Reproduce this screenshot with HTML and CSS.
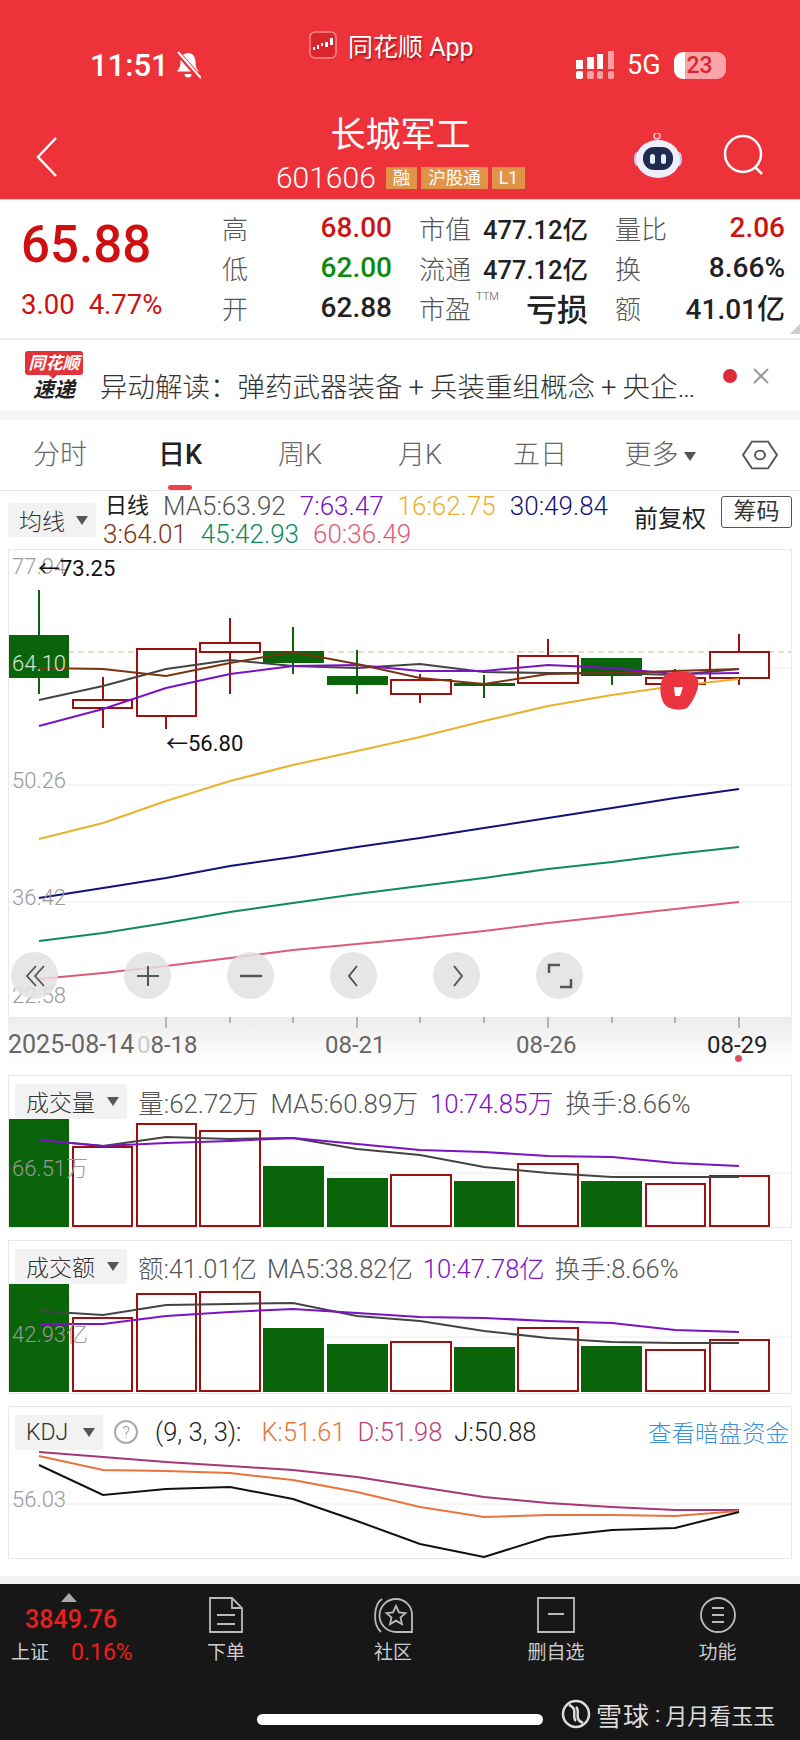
FILE: index.html
```html
<!DOCTYPE html>
<html lang="zh-CN">
<head>
    <meta charset="UTF-8">
    <meta name="viewport" content="width=device-width, initial-scale=1.0">
    <title>长城军工</title>
    <link rel="stylesheet" href="styles.css">
</head>
<body>
    <header class="top">
        <div class="status">
            <div class="status-time">
                <span>11:51</span>
                <svg class="bell" width="26" height="30" viewBox="0 0 26 30">
                    <path d="M13 3c-5 0-7.500 4-7.500 9 0 5-1.500 7-3.500 9.500h22c-2-2.500-3.500-4.500-3.500-9.500 0-5-2.500-9-7.500-9z" fill="#fff"/>
                    <path d="M9.500 24a3.500 3.500 0 0 0 7 0z" fill="#fff"/>
                    <path d="M2 2l23 26" stroke="#ee323a" stroke-width="5"/>
                    <path d="M3 2l23 26" stroke="#fff" stroke-width="2"/>
                </svg>
            </div>
            <div class="status-app">
                <svg width="28" height="28" viewBox="0 0 28 28">
                    <rect x="1" y="1" width="26" height="26" rx="5" fill="#d8262c" stroke="#f88" stroke-width="1.500"/>
                    <path d="M4 16h2v3H4zM8 14h2v4H8zM12 12h2v3h-2zM16 11h3v5h-3zM21 7h3v7h-3z" fill="#fff"/>
                </svg>
                <span>同花顺 App</span>
            </div>
            <div class="status-right">
                <svg width="40" height="30" viewBox="0 0 40 30">
                    <path d="M2 10h7v9H2zM13 7h7v12h-7zM23 4h6v15h-6z" fill="#fff"/>
                    <path d="M34 1h6v18h-6z" fill="#f8a0a4"/>
                    <rect x="2" y="21" width="7" height="8" rx="2" fill="#fff"/>
                    <rect x="13" y="21" width="7" height="8" rx="2" fill="#f8a0a4"/>
                    <rect x="23" y="21" width="6" height="8" rx="2" fill="#f8a0a4"/>
                    <rect x="34" y="21" width="6" height="8" rx="2" fill="#f8a0a4"/>
                </svg>
                <span class="net">5G</span>
                <span class="battery">23</span>
            </div>
        </div>
        <div class="nav">
            <div class="nav-left">
                <svg width="24" height="42" viewBox="0 0 24 42">
                    <path d="M21 2L3 21l18 19" fill="none" stroke="#fff" stroke-width="2.500"/>
                </svg>
            </div>
            <div class="nav-title">
                <h1>长城军工</h1>
                <div class="nav-code">
                    <span class="code">601606</span>
                    <span class="tag">融</span>
                    <span class="tag">沪股通</span>
                    <span class="tag">L1</span>
                </div>
            </div>
            <div class="nav-right">
                <svg width="52" height="46" viewBox="0 0 52 46">
                    <circle cx="25" cy="3" r="3" fill="none" stroke="#f6c6cc" stroke-width="1.500"/>
                    <ellipse cx="5" cy="26" rx="3" ry="7" fill="#c9c6f2"/>
                    <ellipse cx="47" cy="26" rx="3" ry="7" fill="#c9c6f2"/>
                    <ellipse cx="26" cy="26" rx="22" ry="19" fill="#eeeefc"/>
                    <rect x="11" y="14" width="30" height="23" rx="11" fill="#1f2b4f"/>
                    <rect x="18" y="21" width="5" height="10" rx="2.500" fill="#e8ecff"/>
                    <rect x="29" y="21" width="5" height="10" rx="2.500" fill="#e8ecff"/>
                </svg>
                <svg width="44" height="44" viewBox="0 0 44 44">
                    <circle cx="21" cy="21" r="18" fill="none" stroke="#fff" stroke-width="2.500"/>
                    <path d="M33 34l7 7" stroke="#fff" stroke-width="2.500"/>
                </svg>
            </div>
        </div>
    </header>

    <section class="quote">
        <div class="quote-price">
            <div class="price">65.88</div>
            <div class="change"><span>3.00</span><span>4.77%</span></div>
        </div>
        <div class="quote-grid">
            <div class="cell"><span class="lbl">高</span><span class="val red">68.00</span></div>
            <div class="cell"><span class="lbl">市值</span><span class="val cap">477.12亿</span></div>
            <div class="cell"><span class="lbl">量比</span><span class="val red">2.06</span></div>
            <div class="cell"><span class="lbl">低</span><span class="val green">62.00</span></div>
            <div class="cell"><span class="lbl">流通</span><span class="val cap">477.12亿</span></div>
            <div class="cell"><span class="lbl">换</span><span class="val">8.66%</span></div>
            <div class="cell"><span class="lbl">开</span><span class="val">62.88</span></div>
            <div class="cell"><span class="lbl">市盈<sup>TTM</sup></span><span class="val big">亏损</span></div>
            <div class="cell"><span class="lbl">额</span><span class="val">41.01亿</span></div>
        </div>
        <span class="corner"></span>
    </section>

    <section class="news">
        <div class="news-logo">
            <span class="news-flag">同花顺</span>
            <span class="news-sub">速递</span>
        </div>
        <p class="news-text">异动解读：弹药武器装备<span class="plus">+</span>兵装重组概念<span class="plus">+</span>央企…</p>
        <span class="news-dot"></span>
        <svg class="news-close" width="18" height="18" viewBox="0 0 18 18">
            <path d="M2 2l14 14M16 2L2 16" stroke="#999" stroke-width="2"/>
        </svg>
    </section>

    <nav class="tabs">
        <a class="tab">分时</a>
        <a class="tab active">日K</a>
        <a class="tab">周K</a>
        <a class="tab">月K</a>
        <a class="tab">五日</a>
        <a class="tab">更多<i class="tri small"></i></a>
        <svg class="tab-gear" width="36" height="32" viewBox="0 0 36 36" preserveAspectRatio="none">
            <path d="M10 3h16l9 15-9 15H10L1 18z" fill="none" stroke="#555" stroke-width="2"/>
            <circle cx="18" cy="18" r="5" fill="none" stroke="#555" stroke-width="2"/>
        </svg>
    </nav>

    <section class="legend">
        <div class="select ma-select"><span>均线</span><i class="tri"></i></div>
        <div class="ma-list">
            <span class="ma-day">日线</span>
            <span class="c-gray">MA5:63.92</span>
            <span class="c-purple">7:63.47</span>
            <span class="c-orange">16:62.75</span>
            <span class="c-navy">30:49.84</span>
            <span class="c-brown">3:64.01</span>
            <span class="c-teal">45:42.93</span>
            <span class="c-pink">60:36.49</span>
        </div>
        <span class="adjust">前复权</span>
        <span class="chip">筹码</span>
    </section>

    <section class="kline">
        <svg class="kline-svg" width="784" height="468" viewBox="8 549 784 468">
            <g stroke="#ececec" stroke-width="1">
                <path d="M8 667h784M8 784h784M8 901h784"/>
            </g>
            <path d="M8 651h784" stroke="#cbb9a0" stroke-width="1" stroke-dasharray="6 4"/>

            <g stroke="#0a640a" stroke-width="2">
                <path d="M39 589v104M293 626v47M357 649v44M484 674v23M612 675v9"/>
            </g>
            <g stroke="#9c1010" stroke-width="2">
                <path d="M103 676v51M166 715v13M230 617v76M420 673v29M548 638v17M675 668v15M739 633v51"/>
            </g>
            <g fill="#0a640a">
                <rect x="8" y="634" width="61" height="43"/>
                <rect x="263" y="650" width="61" height="12"/>
                <rect x="327" y="675" width="61" height="9"/>
                <rect x="454" y="682" width="61" height="3"/>
                <rect x="581" y="657" width="61" height="18"/>
            </g>
            <g fill="#fff" stroke="#9c1010" stroke-width="2">
                <rect x="73" y="699" width="59" height="8"/>
                <rect x="137" y="648" width="59" height="67"/>
                <rect x="200" y="642" width="60" height="9"/>
                <rect x="391" y="679" width="60" height="14"/>
                <rect x="518" y="655" width="60" height="27"/>
                <rect x="646" y="677" width="59" height="6"/>
                <rect x="710" y="651" width="59" height="26"/>
            </g>

            <g fill="none" stroke-width="2">
                <polyline stroke="#444" points="39,699 103,685 166,668 230,659 293,665 357,667 420,663 484,671 548,672 612,672 675,674 739,668"/>
                <polyline stroke="#7b12c4" points="39,725 103,708 166,687 230,673 293,665 357,664 420,670 484,670 548,664 612,667 675,673 739,672"/>
                <polyline stroke="#7a3311" points="39,667 103,668 166,675 230,662 293,651 357,663 420,677 484,683 548,673 612,672 675,670 739,668"/>
                <polyline stroke="#eab12e" points="39,838 103,822 166,800 230,780 293,764 357,750 420,736 484,720 548,705 612,694 675,685 739,678"/>
                <polyline stroke="#12127a" points="39,897 103,887 166,877 230,865 293,856 357,846 420,837 484,827 548,817 612,807 675,797 739,788"/>
                <polyline stroke="#0d8a60" points="39,940 103,932 166,922 230,911 293,902 357,893 420,885 484,877 548,868 612,861 675,853 739,846"/>
                <polyline stroke="#de5b78" points="39,978 103,972 166,965 230,957 293,949 357,943 420,937 484,930 548,922 612,915 675,908 739,901"/>
            </g>

            <path d="M666 673c14-5 29-3 32 6 2 8-5 22-11 28-8 3-20 2-24-6-4-9-4-21 3-28z" fill="#ea3540"/>
            <path d="M674 686h9l-3 9h-5z" fill="#fff"/>

            <g class="axis-text">
                <text x="12" y="573">77.94</text>
                <text x="12" y="670" fill="#d8e4d8">64.10</text>
                <text x="12" y="787">50.26</text>
                <text x="12" y="904">36.42</text>
                <text x="12" y="1002">22.58</text>
            </g>
            <g class="mark-text">
                <text x="38" y="575">←73.25</text>
                <text x="166" y="750">←56.80</text>
            </g>
        </svg>
        <div class="tools">
            <span class="tool first">
                <svg width="24" height="24" viewBox="0 0 24 24"><path d="M13 2L4 12l9 10M21 2l-9 10 9 10" fill="none" stroke="#555" stroke-width="1.800"/></svg>
            </span>
            <span class="tool">
                <svg width="24" height="24" viewBox="0 0 24 24"><path d="M12 2v20M1 12h22" fill="none" stroke="#555" stroke-width="2"/></svg>
            </span>
            <span class="tool">
                <svg width="24" height="24" viewBox="0 0 24 24"><path d="M1 12h22" fill="none" stroke="#555" stroke-width="2.500"/></svg>
            </span>
            <span class="tool">
                <svg width="24" height="24" viewBox="0 0 24 24"><path d="M15 2L7 12l8 10" fill="none" stroke="#555" stroke-width="2"/></svg>
            </span>
            <span class="tool">
                <svg width="24" height="24" viewBox="0 0 24 24"><path d="M9 2l8 10-8 10" fill="none" stroke="#555" stroke-width="2"/></svg>
            </span>
            <span class="tool">
                <svg width="28" height="26" viewBox="0 0 28 26"><path d="M14 2H3v8M14 24h11v-8" fill="none" stroke="#555" stroke-width="2.500"/></svg>
            </span>
        </div>
    </section>

    <section class="dates">
        <svg class="dates-ticks" width="784" height="12" viewBox="8 1017 784 12">
            <path d="M166 1017v11M357 1017v11M548 1017v11M739 1017v11M230 1017v6M293 1017v6M420 1017v6M484 1017v6M612 1017v6M675 1017v6" stroke="#777" stroke-width="1"/>
        </svg>
        <div class="dates-row">
            <span class="d1">2025-08-14</span>
            <span class="d2"><em>0</em>8-18</span>
            <span class="d3">08-21</span>
            <span class="d4">08-26</span>
            <span class="d5">08-29</span>
        </div>
        <span class="dates-dot"></span>
    </section>

    <section class="panel vol">
        <div class="panel-head">
            <div class="select"><span>成交量</span><i class="tri"></i></div>
            <span>量:62.72万</span>
            <span>MA5:60.89万</span>
            <span class="c-purple">10:74.85万</span>
            <span>换手:8.66%</span>
        </div>
        <svg class="panel-svg" width="784" height="108" viewBox="8 1119 784 108">
            <path d="M8 1173h784" stroke="#ececec"/>
            <g fill="#0a640a">
                <rect x="8" y="1119" width="61" height="108"/>
                <rect x="263" y="1166" width="61" height="61"/>
                <rect x="327" y="1178" width="61" height="49"/>
                <rect x="454" y="1181" width="61" height="46"/>
                <rect x="581" y="1181" width="61" height="46"/>
            </g>
            <g fill="#fff" stroke="#9c1010" stroke-width="2">
                <rect x="73" y="1147" width="59" height="79"/>
                <rect x="137" y="1124" width="59" height="102"/>
                <rect x="200" y="1131" width="60" height="95"/>
                <rect x="391" y="1175" width="60" height="51"/>
                <rect x="518" y="1164" width="60" height="62"/>
                <rect x="646" y="1184" width="59" height="42"/>
                <rect x="710" y="1176" width="59" height="50"/>
            </g>
            <g fill="none" stroke-width="2">
                <polyline stroke="#444" points="39,1140 103,1146 166,1137 230,1139 293,1138 357,1149 420,1155 484,1167 548,1173 612,1177 675,1177 739,1177"/>
                <polyline stroke="#7b12c4" points="39,1140 103,1146 166,1143 230,1141 293,1138 357,1144 420,1150 484,1152 548,1156 612,1157 675,1163 739,1166"/>
            </g>
            <text class="axis-text" x="12" y="1176" fill="#d8e4d8">66.51万</text>
        </svg>
    </section>

    <section class="panel amt">
        <div class="panel-head">
            <div class="select"><span>成交额</span><i class="tri"></i></div>
            <span>额:41.01亿</span>
            <span>MA5:38.82亿</span>
            <span class="c-purple">10:47.78亿</span>
            <span>换手:8.66%</span>
        </div>
        <svg class="panel-svg" width="784" height="108" viewBox="8 1285 784 108">
            <path d="M8 1338h784" stroke="#ececec"/>
            <g fill="#0a640a">
                <rect x="8" y="1285" width="61" height="108"/>
                <rect x="263" y="1329" width="61" height="64"/>
                <rect x="327" y="1345" width="61" height="48"/>
                <rect x="454" y="1348" width="61" height="45"/>
                <rect x="581" y="1347" width="61" height="46"/>
            </g>
            <g fill="#fff" stroke="#9c1010" stroke-width="2">
                <rect x="73" y="1319" width="59" height="73"/>
                <rect x="137" y="1295" width="59" height="97"/>
                <rect x="200" y="1293" width="60" height="99"/>
                <rect x="391" y="1343" width="60" height="49"/>
                <rect x="518" y="1329" width="60" height="63"/>
                <rect x="646" y="1351" width="59" height="41"/>
                <rect x="710" y="1341" width="59" height="51"/>
            </g>
            <g fill="none" stroke-width="2">
                <polyline stroke="#444" points="39,1312 103,1316 166,1306 230,1305 293,1304 357,1317 420,1322 484,1332 548,1339 612,1343 675,1344 739,1344"/>
                <polyline stroke="#7b12c4" points="39,1325 103,1325 166,1317 230,1313 293,1310 357,1314 420,1318 484,1319 548,1322 612,1324 675,1331 739,1333"/>
            </g>
            <text class="axis-text" x="12" y="1343" fill="#d8e4d8">42.93亿</text>
        </svg>
    </section>

    <section class="panel kdj">
        <div class="panel-head dark">
            <div class="select"><span>KDJ</span><i class="tri"></i></div>
            <span class="help">?</span>
            <span>(9, 3, 3):</span>
            <span class="c-k">K:51.61</span>
            <span class="c-d">D:51.98</span>
            <span>J:50.88</span>
            <a class="dark-pool">查看暗盘资金</a>
        </div>
        <svg class="panel-svg" width="784" height="108" viewBox="8 1450 784 108">
            <path d="M8 1504h784" stroke="#ececec"/>
            <g fill="none" stroke-width="2">
                <polyline stroke="#a8347a" points="39,1452 103,1457 166,1462 230,1466 293,1470 357,1477 420,1487 484,1497 548,1503 612,1507 675,1510 739,1510"/>
                <polyline stroke="#e8743b" points="39,1456 103,1470 166,1471 230,1473 293,1480 357,1492 420,1507 484,1517 548,1515 612,1515 675,1516 739,1511"/>
                <polyline stroke="#111" points="39,1465 103,1495 166,1489 230,1487 293,1499 357,1521 420,1544 484,1557 548,1537 612,1530 675,1528 739,1512"/>
            </g>
            <text class="axis-text" x="12" y="1507">56.03</text>
        </svg>
    </section>
    <div class="page-gap"></div>

    <footer class="bottom">
        <div class="bottom-bar">
            <div class="index">
                <i class="index-up"></i>
                <div class="index-num">3849.76</div>
                <div class="index-row"><span>上证</span><b>0.16%</b></div>
            </div>
            <div class="act">
                <svg width="36" height="38" viewBox="0 0 36 38">
                    <path d="M2 2h22l10 10v24H2zM24 2v10h10M9 19h18M9 28h18" fill="none" stroke="#bbb" stroke-width="1.800"/>
                </svg>
                <span>下单</span>
            </div>
            <div class="act">
                <svg width="44" height="38" viewBox="0 0 44 38">
                    <path d="M11 3C3 8 1 28 10 36" fill="none" stroke="#bbb" stroke-width="1.800"/>
                    <path d="M25 3a16 16 0 0 1 16 16v17H25a16 16 0 0 1 0-33z" fill="none" stroke="#bbb" stroke-width="1.800"/>
                    <path d="M25 10l3 6.500 6.500.6-5 4.500 1.500 6.500-6-3.500-6 3.500 1.500-6.500-5-4.500 6.500-.6z" fill="none" stroke="#bbb" stroke-width="1.800"/>
                </svg>
                <span>社区</span>
            </div>
            <div class="act">
                <svg width="40" height="38" viewBox="0 0 40 38">
                    <path d="M2 2h36v34H2zM12 18h16" fill="none" stroke="#bbb" stroke-width="1.800"/>
                </svg>
                <span>删自选</span>
            </div>
            <div class="act">
                <svg width="38" height="38" viewBox="0 0 38 38">
                    <circle cx="19" cy="19" r="17" fill="none" stroke="#bbb" stroke-width="1.800"/>
                    <path d="M13 12h12M13 19h12M13 26h12" stroke="#bbb" stroke-width="1.800"/>
                </svg>
                <span>功能</span>
            </div>
        </div>
        <div class="bottom-home">
            <span class="home-bar"></span>
            <div class="mark">
                <svg width="30" height="30" viewBox="0 0 30 30">
                    <circle cx="15" cy="15" r="13" fill="none" stroke="#ddd" stroke-width="2.500"/>
                    <path d="M8 6c10 4 2 12 7 16M22 24c-10-4-2-12-7-16" fill="none" stroke="#ddd" stroke-width="2.500"/>
                </svg>
                <span class="mark-brand">雪球</span>
                <span class="mark-colon">:</span>
                <span class="mark-name">月月看玉玉</span>
            </div>
        </div>
    </footer>
</body>
</html>
```

FILE: styles.css
```css
* {
    box-sizing: border-box;
}

body {
    margin: 0;
    width: 800px;
    height: 1740px;
    overflow: hidden;
    background-color: #fff;
    font-family: Roboto, "Noto Sans CJK SC", sans-serif;
    color: #333;
}

/* header */
.top {
    height: 199px;
    background-color: #ee323a;
    color: #fff;
}

.status {
    display: flex;
    height: 110px;
    padding-left: 90px;
}

.status-time {
    display: flex;
    align-items: center;
    gap: 6px;
    width: 219px;
    height: 30px;
    margin-top: 50px;
    font-size: 31px;
    font-weight: 500;
}

.status-app {
    display: flex;
    align-items: center;
    gap: 11px;
    width: 265px;
    height: 30px;
    margin-top: 30px;
    font-size: 25px;
    text-shadow: 1px 2px 2px rgba(120, 0, 0, 0.6);
}

.status-right {
    display: flex;
    align-items: center;
    height: 30px;
    margin-top: 50px;
}

.net {
    margin: 0 13px 0 13px;
    font-size: 27px;
}

.battery {
    width: 52px;
    height: 27px;
    border-radius: 9px;
    background: linear-gradient(90deg, #fff 22%, #f9a5a9 22%);
    color: #d8262c;
    font-size: 23px;
    font-weight: 500;
    line-height: 27px;
    text-align: center;
}

.nav {
    display: grid;
    grid-template-columns: 1fr auto 1fr;
    height: 89px;
    padding: 0 34px 0 35px;
}

.nav-left {
    padding-top: 26px;
}

.nav-title {
    display: flex;
    flex-direction: column;
    align-items: center;
    padding-top: 2px;
}

.nav-title h1 {
    margin: 0;
    font-size: 35px;
    font-weight: 400;
    line-height: 48px;
}

.nav-code {
    display: flex;
    align-items: center;
    gap: 4px;
    margin-top: 7px;
}

.code {
    margin-right: 6px;
    font-size: 30px;
    font-weight: 300;
    line-height: 22px;
}

.tag {
    height: 22px;
    padding: 0 7px;
    background-color: #e0944a;
    color: #fff;
    font-size: 17.500px;
    line-height: 22px;
}

.nav-right {
    display: flex;
    justify-content: flex-end;
    align-items: flex-start;
    gap: 38px;
    padding-top: 23px;
}

/* quote */
.quote {
    position: relative;
    display: flex;
    height: 141px;
    border-top: 1px solid #f0d8d8;
    border-bottom: 2px solid #ececec;
}

.quote-price {
    width: 222px;
    padding: 20px 0 0 21px;
    color: #d01010;
}

.price {
    font-size: 51px;
    font-weight: 500;
    line-height: 50px;
}

.change {
    display: flex;
    gap: 14px;
    margin-top: 20px;
    font-size: 27.500px;
    line-height: 30px;
}

.quote-grid {
    display: grid;
    grid-template-columns: 170px 169px 170px;
    grid-auto-rows: 40px;
    column-gap: 27px;
    padding-top: 7px;
}

.cell {
    display: flex;
    align-items: center;
    justify-content: space-between;
}

.lbl {
    position: relative;
    color: #555;
    font-size: 26px;
    font-weight: 300;
}

.lbl sup {
    position: absolute;
    top: 2px;
    left: 57px;
    font-size: 11px;
    line-height: 12px;
}

.val {
    color: #222;
    font-size: 28px;
    font-weight: 500;
}

.val.cap {
    font-size: 25.500px;
}

.val.red {
    color: #cc1414;
}

.val.green {
    color: #0c8a0c;
}

.val.big {
    font-size: 31px;
}

.corner {
    position: absolute;
    right: 0;
    bottom: 4px;
    border-left: 10px solid transparent;
    border-bottom: 10px solid #ccc;
}

/* news banner */
.news {
    position: relative;
    display: flex;
    align-items: center;
    height: 71px;
}

.news-logo {
    display: flex;
    flex-direction: column;
    align-items: center;
    width: 58px;
    margin: 0 17px 0 25px;
    font-style: italic;
    font-weight: 700;
}

.news-flag {
    position: relative;
    width: 58px;
    height: 24px;
    margin-bottom: 4px;
    border-radius: 3px;
    background-color: #e2333b;
    color: #fff;
    font-size: 17px;
    line-height: 24px;
    text-align: center;
}

.news-flag::after {
    content: "";
    position: absolute;
    left: 24px;
    top: 24px;
    border: 4px solid transparent;
    border-top-color: #e2333b;
}

.news-sub {
    color: #222;
    font-size: 21px;
    line-height: 22px;
}

.news-text {
    width: 612px;
    margin: 18px 0 0;
    color: #333;
    font-size: 27.500px;
    font-weight: 300;
    white-space: nowrap;
}

.plus {
    margin: 0 6px;
}

.news-dot {
    width: 14px;
    height: 14px;
    margin-left: 11px;
    flex: none;
    border-radius: 50%;
    background-color: #dc2b3a;
}

.news-close {
    margin-left: 15px;
    flex: none;
}

/* tabs */
.tabs {
    position: relative;
    display: flex;
    height: 80px;
    border-top: 9px solid #f5f5f5;
    border-bottom: 1px solid #e8e8e8;
}

.tab {
    position: relative;
    width: 120px;
    color: #666;
    font-size: 27px;
    font-weight: 300;
    line-height: 70px;
    text-align: center;
}

.tab.active {
    color: #222;
    font-weight: 500;
}

.tab.active::after {
    content: "";
    position: absolute;
    left: 48px;
    bottom: 0;
    width: 24px;
    height: 5px;
    border-radius: 3px;
    background-color: #f0424a;
}

.tab-gear {
    margin: 19px 0 0 22px;
}

.tri {
    display: inline-block;
    border: 6px solid transparent;
    border-top: 9px solid #555;
    border-bottom: 0;
}

.tri.small {
    margin-left: 5px;
    vertical-align: 3px;
}

/* moving average legend */
.legend {
    display: flex;
    align-items: flex-start;
    height: 58px;
    padding: 12px 0 0 8px;
    position: relative;
}

.select {
    display: flex;
    align-items: center;
    justify-content: space-between;
    height: 34px;
    padding: 0 8px 0 11px;
    border-radius: 3px;
    background-color: #f2f2f2;
    color: #333;
    font-size: 23px;
    font-weight: 300;
}

.ma-select {
    width: 88px;
    flex: none;
}

.ma-list {
    display: flex;
    flex-wrap: wrap;
    align-items: center;
    column-gap: 14px;
    width: 531px;
    margin: -11px 0 0 7px;
    font-size: 26px;
    font-weight: 300;
    line-height: 28px;
}

.ma-day {
    width: 44px;
    margin-left: 2px;
    font-size: 22px;
    font-weight: 400;
    color: #222;
}

.c-gray {
    color: #555;
}

.c-purple {
    color: #7b12c4;
}

.c-orange {
    color: #eab12e;
}

.c-navy {
    color: #12127a;
}

.c-brown {
    color: #7a3311;
}

.c-teal {
    color: #0d8a60;
}

.c-pink {
    color: #de5b78;
}

.c-k {
    margin-left: 8px;
    color: #e8743b;
}

.c-d {
    color: #c0407a;
}

.adjust {
    margin: -2px 0 0 0;
    color: #222;
    font-size: 24px;
    line-height: 36px;
    white-space: nowrap;
}

.chip {
    width: 71px;
    height: 32px;
    margin: -7px 0 0 15px;
    flex: none;
    border: 1px solid #555;
    border-radius: 3px;
    color: #333;
    font-size: 23px;
    line-height: 30px;
    text-align: center;
}

/* k line */
.kline {
    position: relative;
    height: 468px;
    margin: 0 8px;
    border: 1px solid #e8e8e8;
    border-bottom: 0;
    overflow: hidden;
}

.kline-svg,
.panel-svg,
.dates-ticks {
    display: block;
    margin-left: -1px;
}

.axis-text {
    fill: #999;
    font-size: 22px;
    font-weight: 300;
}

.mark-text {
    fill: #111;
    font-size: 22px;
}

.tools {
    position: absolute;
    left: 2px;
    top: 402px;
    display: flex;
    gap: 56px;
}

.tool {
    display: flex;
    align-items: center;
    justify-content: center;
    width: 47px;
    height: 47px;
    border-radius: 50%;
    background-color: rgba(226, 226, 226, 0.85);
}

.tool.first {
    margin-right: 10px;
}

/* date axis */
.dates {
    position: relative;
    height: 58px;
    margin: 0 8px;
    background: linear-gradient(180deg, #ececec 0, #fff 80%);
}

.dates-ticks {
    margin-left: 0;
}

.dates-row {
    position: relative;
    height: 30px;
    color: #666;
    font-size: 24px;
    line-height: 30px;
}

.dates-row span {
    position: absolute;
    top: 1px;
    white-space: nowrap;
}

.dates-row .d1 {
    left: 0;
    font-size: 25px;
}

.d2 {
    left: 129px;
}

.d2 em {
    color: #ccc;
    font-style: normal;
}

.d3 {
    left: 317px;
}

.d4 {
    left: 508px;
}

.d5 {
    left: 699px;
    color: #222;
}

.dates-dot {
    position: absolute;
    left: 727px;
    top: 38px;
    width: 7px;
    height: 7px;
    border-radius: 50%;
    background-color: #e0505a;
}

/* indicator panels */
.panel {
    margin: 0 8px;
    border: 1px solid #e8e8e8;
    overflow: hidden;
}

.vol {
    height: 153px;
    margin-bottom: 12px;
}

.amt {
    height: 154px;
    margin-bottom: 12px;
}

.panel-head {
    display: flex;
    align-items: center;
    gap: 12px;
    height: 43px;
    padding: 7px 0 0 6px;
    color: #555;
    font-size: 25.800px;
    font-weight: 300;
    white-space: nowrap;
}

.amt .panel-head {
    gap: 10px;
    font-size: 25.500px;
}

.amt .panel-head .select {
    margin-right: 1px;
}

.panel-head .select {
    width: 112px;
    height: 35px;
    margin-right: -1px;
    flex: none;
}

.panel-head.dark {
    color: #222;
    font-size: 25.500px;
}

.kdj .select {
    width: 88px;
}

.help {
    width: 24px;
    height: 24px;
    margin: 0 5px 0 0;
    border: 2px solid #aaa;
    border-radius: 50%;
    color: #999;
    font-size: 17px;
    line-height: 20px;
    text-align: center;
    flex: none;
}

.dark-pool {
    margin-left: auto;
    margin-right: 2px;
    color: #3b8fd8;
    font-size: 23.500px;
}

.kdj {
    height: 153px;
}

.page-gap {
    height: 25px;
    border-top: 17px solid #fff;
    background-color: #f2f2f2;
}

/* footer */
.bottom {
    height: 156px;
    background-color: #171717;
    color: #ccc;
}

.bottom-bar {
    display: grid;
    grid-template-columns: 143px 166px 168px 158px 165px;
    height: 118px;
}

.index {
    position: relative;
    padding: 9px 0 0 11px;
}

.index-up {
    display: block;
    width: 0;
    margin: 0 0 0 50px;
    border: 8px solid transparent;
    border-top: 0;
    border-bottom: 9px solid #aaa;
}

.index-num {
    margin: 3px 0 0 14px;
    color: #f01c1c;
    font-size: 25px;
    font-weight: 500;
    line-height: 30px;
}

.index-row {
    display: flex;
    gap: 22px;
    margin-top: 3px;
    font-size: 19px;
    line-height: 30px;
}

.index-row b {
    color: #f01c1c;
    font-size: 23px;
    font-weight: 400;
}

.act {
    display: flex;
    flex-direction: column;
    align-items: center;
    gap: 5px;
    padding-top: 12px;
    font-size: 19px;
    line-height: 28px;
}

.bottom-home {
    display: flex;
    align-items: center;
    height: 30px;
    padding-left: 257px;
}

.home-bar {
    width: 286px;
    height: 11px;
    margin-top: 4px;
    border-radius: 6px;
    background-color: #fff;
}

.mark {
    display: flex;
    align-items: center;
    gap: 5px;
    margin: -6px 0 0 18px;
    color: #ddd;
    white-space: nowrap;
}

.mark-brand {
    font-size: 26px;
    letter-spacing: 1px;
}

.mark-colon {
    font-size: 22px;
}

.mark-name {
    font-size: 22px;
}
```
